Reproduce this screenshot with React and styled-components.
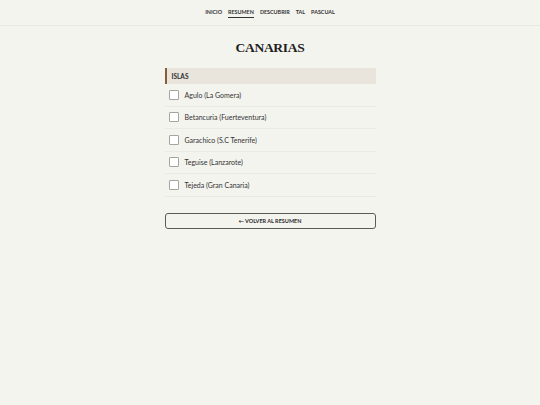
import React from 'react'
import styled, { createGlobalStyle } from 'styled-components'

const GlobalStyle = createGlobalStyle`
    html, body {
        margin: 0;
        padding: 0;
        background: #f4f4ef;
        font-family: Lato, "Open Sans", sans-serif;
        color: #2b2b2b;
    }
`

const Header = styled.header`
    height: 26px;
    border-bottom: 1px solid #e9e9e2;
    display: flex;
    align-items: center;
    justify-content: center;
    box-sizing: border-box;
`

const Nav = styled.nav`
    display: flex;
    gap: 6px;
    padding-top: 1px;
`

const NavLink = styled.a`
    font-size: 5.4px;
    font-weight: 700;
    text-transform: uppercase;
    color: #333;
    text-decoration: none;
    padding-bottom: 2px;
    border-bottom: 1px solid ${p => (p.$active ? '#333' : 'transparent')};
`

const Main = styled.main`
    width: 211px;
    margin: 0 auto;
    padding-top: 14px;
`

const Title = styled.h1`
    margin: 0 0 12px;
    text-align: center;
    font-family: "Liberation Serif", "DejaVu Serif", serif;
    font-weight: 700;
    font-size: 13.5px;
    letter-spacing: -0.3px;
    line-height: 16px;
    color: #1e1e1e;
`

const SectionHead = styled.div`
    height: 16px;
    background: #e9e4dc;
    border-left: 2px solid #8b5a36;
    display: flex;
    align-items: center;
    padding-left: 5px;
    font-size: 6.5px;
    font-weight: 700;
    color: #2b2b2b;
    box-sizing: border-box;
`

const List = styled.ul`
    list-style: none;
    margin: 0;
    padding: 0;
`

const Row = styled.li`
    height: 22.5px;
    display: flex;
    align-items: center;
    gap: 6px;
    padding-left: 4px;
    border-bottom: 1px solid #eaeae3;
    box-sizing: border-box;
    font-size: 7px;
    color: #333;
`

const Box = styled.span`
    width: 10px;
    height: 10px;
    background: #fff;
    border: 1px solid #a5a5a0;
    border-radius: 1px;
    box-sizing: border-box;
`

const BackButton = styled.button`
    margin-top: 16px;
    width: 100%;
    height: 16px;
    border: 1px solid #5a5a58;
    border-radius: 3px;
    background: transparent;
    font-family: Lato, sans-serif;
    font-size: 5.5px;
    font-weight: 700;
    color: #2b2b2b;
    cursor: pointer;
    padding: 0;
`

const islas = [
    'Agulo (La Gomera)',
    'Betancuria (Fuerteventura)',
    'Garachico (S.C Tenerife)',
    'Teguise (Lanzarote)',
    'Tejeda (Gran Canaria)',
]

const App = () => {
    return (
        <>
            <GlobalStyle />
            <Header>
                <Nav>
                    <NavLink>Inicio</NavLink>
                    <NavLink $active>Resumen</NavLink>
                    <NavLink>Descubrir</NavLink>
                    <NavLink>Tal</NavLink>
                    <NavLink>Pascual</NavLink>
                </Nav>
            </Header>
            <Main>
                <Title>CANARIAS</Title>
                <SectionHead>ISLAS</SectionHead>
                <List>
                    {islas.map(name => (
                        <Row key={name}>
                            <Box />
                            {name}
                        </Row>
                    ))}
                </List>
                <BackButton>← VOLVER AL RESUMEN</BackButton>
            </Main>
        </>
    )
}

export default App
